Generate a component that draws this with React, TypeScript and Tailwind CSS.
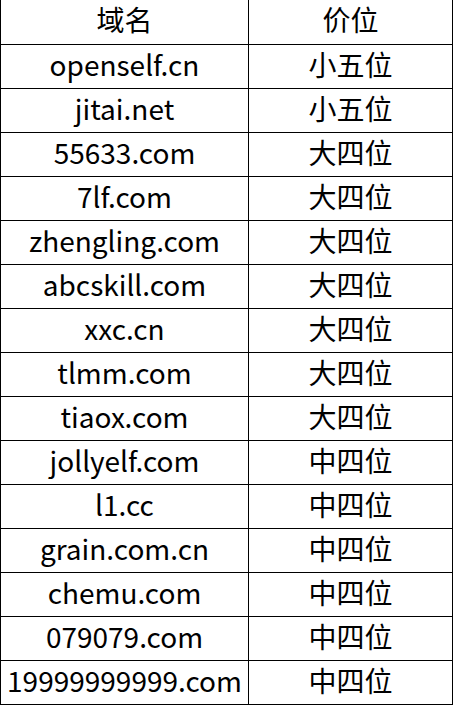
import React from "react";

const rows: [string, string][] = [
  ["openself.cn", "小五位"],
  ["jitai.net", "小五位"],
  ["55633.com", "大四位"],
  ["7lf.com", "大四位"],
  ["zhengling.com", "大四位"],
  ["abcskill.com", "大四位"],
  ["xxc.cn", "大四位"],
  ["tlmm.com", "大四位"],
  ["tiaox.com", "大四位"],
  ["jollyelf.com", "中四位"],
  ["l1.cc", "中四位"],
  ["grain.com.cn", "中四位"],
  ["chemu.com", "中四位"],
  ["079079.com", "中四位"],
  ["19999999999.com", "中四位"],
];

export default function App() {
  return (
    <div className="w-[454px] h-[705px] bg-white">
      <div
        className="w-[453px] border-l border-r border-black text-black text-[28px] leading-none"
        style={{ fontFamily: '"Noto Sans CJK SC", "Noto Sans", sans-serif' }}
      >
        <div className="flex h-[45px] border-b border-black">
          <div className="w-[248px] border-r border-black flex items-center justify-center pb-[6px]">域名</div>
          <div className="flex-1 flex items-center justify-center pb-[6px]">价位</div>
        </div>
        {rows.map(([d, p]) => (
          <div key={d} className="flex h-[44px] border-b border-black">
            <div className="w-[248px] border-r border-black flex items-center justify-center whitespace-nowrap pb-[5px]">{d}</div>
            <div className="flex-1 flex items-center justify-center pb-[5px]">{p}</div>
          </div>
        ))}
      </div>
    </div>
  );
}
